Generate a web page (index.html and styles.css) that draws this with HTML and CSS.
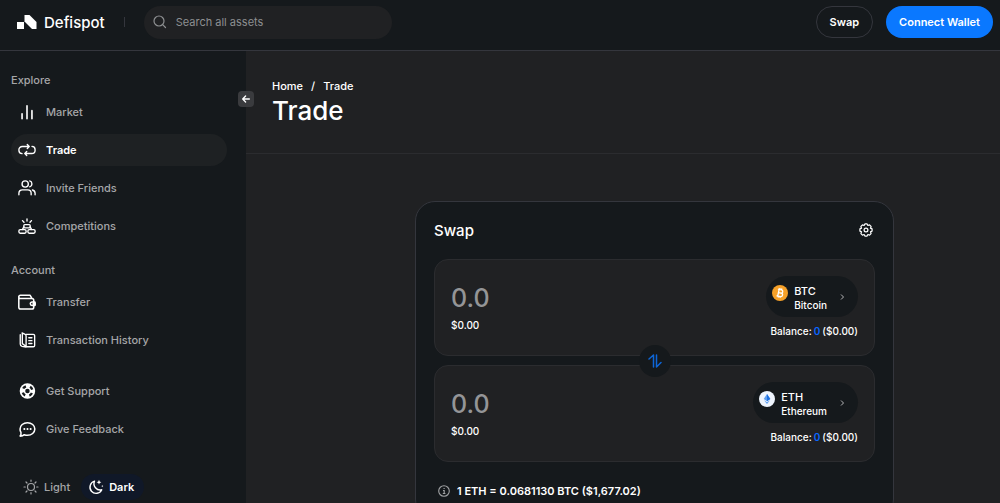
FILE: index.html
```html
<!DOCTYPE html>
<html lang="en">
<head>
  <meta charset="UTF-8">
  <meta name="viewport" content="width=device-width, initial-scale=1">
  <title>Defispot</title>
  <link rel="stylesheet" href="styles.css">
</head>
<body>

  <header class="topbar">
    <a href="#" class="logo">
      <svg width="20" height="14" viewBox="0 0 20 14" fill="#fff"><path d="M0 7h7v7H0z"/><path d="M7.500 0h5l7 7v7h-4.500L7.500 6.500z"/></svg>
      Defispot
    </a>
    <span class="divider"></span>
    <label class="search">
      <svg width="14" height="14" viewBox="0 0 14 14" fill="none" stroke="#8d8f91" stroke-width="1.200" stroke-linecap="round"><circle cx="6" cy="6" r="5"/><path d="M9.700 9.700L12.500 12.500"/></svg>
      <input type="text" placeholder="Search all assets" aria-label="Search all assets">
    </label>
    <div class="actions">
      <button class="btn btn-outline">Swap</button>
      <button class="btn btn-primary">Connect Wallet</button>
    </div>
  </header>

  <div class="layout">
    <aside class="sidebar">
      <button class="collapse" aria-label="Collapse menu">
        <svg width="8" height="8" viewBox="0 0 8 8" fill="none" stroke="#fff" stroke-width="1.300" stroke-linecap="round" stroke-linejoin="round"><path d="M7.400 4H.8M3.600 1L.7 4l2.900 3"/></svg>
      </button>

      <h2 class="nav-title">Explore</h2>
      <nav class="nav">
        <a href="#" class="nav-item">
          <svg class="icon" viewBox="0 0 20 20" stroke-width="1.800"><path d="M4.500 12v5.500M10 3v14.500M15.500 8.500v9"/></svg>
          Market
        </a>
        <a href="#" class="nav-item active">
          <svg class="icon" viewBox="0 0 20 20"><path d="M4.500 14A3.700 3.700 0 0 1 1 10.300v-.5A3.700 3.700 0 0 1 4.700 6.100H12.500M10.300 3.900l2.200 2.200-2.200 2.200M15.500 6A3.700 3.700 0 0 1 19 9.700v.5a3.700 3.700 0 0 1-3.700 3.700H7.500M9.700 16.100l-2.200-2.200 2.200-2.200"/></svg>
          Trade
        </a>
        <a href="#" class="nav-item">
          <svg class="icon" viewBox="0 0 20 20"><circle cx="8" cy="5.500" r="3.500"/><path d="M13 2.100a3.500 3.500 0 0 1 0 6.700M1 17.500v-1.700a3.800 3.800 0 0 1 3.800-3.800h6a3.800 3.800 0 0 1 3.800 3.800v1.700M16 12.200a3.800 3.800 0 0 1 3 3.600v1.700"/></svg>
          Invite Friends
        </a>
        <a href="#" class="nav-item">
          <svg class="icon" viewBox="0 0 20 20"><rect x="1" y="14" width="8" height="4" rx="1.500"/><rect x="11" y="14" width="8" height="4" rx="1.500"/><rect x="6.500" y="8.500" width="7" height="3.500" rx="1"/><path d="M6.500 11L5 13.800M13.500 11l1.500 2.800M10 2v2.500M5 4l1.700 1.900M15 4l-1.700 1.900"/></svg>
          Competitions
        </a>
      </nav>

      <h2 class="nav-title account">Account</h2>
      <nav class="nav">
        <a href="#" class="nav-item">
          <svg class="icon" viewBox="0 0 20 20" stroke-width="1.700"><path d="M.9 3.500v12.300a2 2 0 0 0 2 2h12.600a2 2 0 0 0 2-2V8a2 2 0 0 0-2-2H2.500A1.500 1.500 0 0 1 .9 4.500a1.800 1.800 0 0 1 1.800-1.900h10.800L15.500 6"/><path d="M18.800 10h-3.200a1.900 1.900 0 0 0 0 3.800h3.200z" /><path d="M17 11h2v2h-2z" fill="#fff"/></svg>
          Transfer
        </a>
        <a href="#" class="nav-item">
          <svg class="icon" viewBox="0 0 20 20"><path d="M9 3.800h8a1.500 1.500 0 0 1 1.500 1.500v10.700a1.500 1.500 0 0 1-1.500 1.500H9M4.500 2.200L7.500 3.500A2 2 0 0 1 9 5.500v12.300L4.500 17A2.500 2.500 0 0 1 2.500 14.500V4.200M4.800 2.400v11.600l4 3M12 7.500h3.500M12 10.700h3.500M12 13.900h3.500"/></svg>
          Transaction History
        </a>
      </nav>

      <nav class="nav help">
        <a href="#" class="nav-item">
          <svg class="icon lifebuoy" viewBox="0 0 20 20"><circle cx="10.500" cy="10" r="8.600" fill="#fff" stroke="none"/><circle cx="10.500" cy="10" r="5.500" stroke-width="2.600" stroke-dasharray="3.800 4.839" stroke-dashoffset="-2.420"/><circle cx="10.500" cy="10" r="2.500" fill="#15191c" stroke="none"/></svg>
          Get Support
        </a>
        <a href="#" class="nav-item">
          <svg class="icon" viewBox="0 0 20 20" stroke-width="1.700"><path d="M3.300 13.800A6.800 6.300 0 0 1 2.300 10c0-3.900 3.600-7 8.200-7s8.200 3.100 8.200 7-3.600 7-8.200 7c-1.300 0-2.500-.3-3.500-.7-1 .9-2.600 1.700-4.700 1.600.9-.9 1.300-2.500 1-4.100z"/><path d="M7 10h.1M10.500 10h.1M14 10h.1" stroke-width="2.200"/></svg>
          Give Feedback
        </a>
      </nav>

      <div class="theme">
        <button class="theme-btn">
          <svg width="16" height="16" viewBox="0 0 16 16" fill="none" stroke="#a5a6a8" stroke-width="1.200" stroke-linecap="round"><circle cx="8" cy="8" r="3.500"/><path d="M8 1v1.300M8 13.700V15M1 8h1.300M13.700 8H15M3 3l1 1M12 12l1 1M3 13l1-1M12 4l1-1"/></svg>
          Light
        </button>
        <button class="theme-btn selected">
          <svg width="16" height="16" viewBox="0 0 16 16" fill="none" stroke="#fff" stroke-width="1.400" stroke-linecap="round" stroke-linejoin="round"><path d="M6.500 2.200a6.200 6.200 0 1 0 7.300 8.600A6.300 6.300 0 0 1 6.500 2.200z"/><path d="M11 .8l.7 1.700 1.700.7-1.700.7-.7 1.700-.7-1.700-1.700-.7 1.700-.7zM14.300 6l.3.800.8.300-.8.300-.3.800-.3-.8-.8-.3.800-.3z" fill="#fff" stroke="none"/></svg>
          Dark
        </button>
      </div>
    </aside>

    <main class="main">
      <div class="page-head">
        <div class="breadcrumb"><a href="#">Home</a><span>/</span><a href="#">Trade</a></div>
        <h1>Trade</h1>
      </div>

      <div class="content">
        <section class="card">
          <div class="card-head">
            <h2>Swap</h2>
            <button class="settings" aria-label="Settings">
              <svg width="14" height="14" viewBox="0 0 14 14" fill="none" stroke="#fff" stroke-width="1.200" stroke-linejoin="round"><path d="M5.900.9h2.200l.8 1.600 1.660-.58 1.520 1.520-.58 1.660 1.600.8v2.200l-1.600.8.580 1.660-1.520 1.520-1.660-.58-.8 1.600H5.900l-.8-1.600-1.660.58-1.520-1.520.58-1.660-1.600-.8V5.900l1.600-.8-.58-1.660 1.520-1.520 1.660.58z"/><circle cx="7" cy="7" r="1.900"/></svg>
            </button>
          </div>

          <div class="boxes">
            <div class="box">
              <div class="amount">
                <input type="text" placeholder="0.0" aria-label="Amount to pay">
                <span>$0.00</span>
              </div>
              <div class="side">
                <button class="token">
                  <svg class="coin" viewBox="0 0 16 16"><circle cx="8" cy="8" r="8" fill="#f6a129"/><g fill="none" stroke="#fff" stroke-width="1.300" transform="rotate(12 8 8)"><path d="M5.200 4.600h3.600a1.600 1.600 0 0 1 0 3.300H6.300M6.300 7.900h2.900a1.700 1.700 0 0 1 0 3.500h-4M6.400 4.600v6.800M7.100 3.200v1.400M8.900 3.200v1.400M7.100 11.400v1.400M8.900 11.400v1.400"/></g></svg>
                  <span class="token-name"><b>BTC</b><small>Bitcoin</small></span>
                  <svg class="chevron" viewBox="0 0 5 8"><path d="M1 1.500L3.500 4 1 6.500"/></svg>
                </button>
                <p class="balance"><span>Balance:</span><em>0</em><span>($0.00)</span></p>
              </div>
            </div>

            <button class="switch" aria-label="Switch tokens">
              <svg width="14" height="14" viewBox="0 0 14 14" fill="none" stroke="#0d66d8" stroke-width="1.500" stroke-linecap="round" stroke-linejoin="round"><path d="M1 5l4.500-4v12M8.500 1v12L13 8.500"/></svg>
            </button>

            <div class="box">
              <div class="amount">
                <input type="text" placeholder="0.0" aria-label="Amount to receive">
                <span>$0.00</span>
              </div>
              <div class="side">
                <button class="token">
                  <svg class="coin" viewBox="0 0 16 16"><circle cx="8" cy="8" r="8" fill="#eef4fd"/><path d="M8 3l3.300 5L8 10.200 4.700 8z" fill="#5b9df0"/><path d="M8 3l3.300 5L8 10.200z" fill="#1d6fe0"/><path d="M5 9.200l3 2 3-2L8 13z" fill="#5b9df0"/></svg>
                  <span class="token-name"><b>ETH</b><small>Ethereum</small></span>
                  <svg class="chevron" viewBox="0 0 5 8"><path d="M1 1.500L3.500 4 1 6.500"/></svg>
                </button>
                <p class="balance"><span>Balance:</span><em>0</em><span>($0.00)</span></p>
              </div>
            </div>
          </div>

          <div class="rate">
            <svg width="12" height="12" viewBox="0 0 12 12" fill="none" stroke="#a0a2a4" stroke-width="1.100"><circle cx="6" cy="6" r="5.300"/><path d="M5 5.500h1.200v3M4.800 8.500h2.600M5.500 3.500h1.200"/></svg>
            <span>1 ETH = 0.0681130 BTC ($1,677.02)</span>
          </div>
        </section>
      </div>
    </main>
  </div>

</body>
</html>
```
FILE: styles.css
```css
* {
  box-sizing: border-box;
  margin: 0;
  padding: 0;
}

body {
  height: 100vh;
  display: flex;
  flex-direction: column;
  overflow: hidden;
  background: #202123;
  color: #fff;
  font-family: Inter, sans-serif;
  font-size: 11px;
  font-weight: 500;
}

a {
  color: inherit;
  text-decoration: none;
}

button,
input {
  font: inherit;
  color: inherit;
  background: none;
  border: none;
  outline: none;
}

button {
  cursor: pointer;
}

/* top bar */
.topbar {
  display: flex;
  align-items: center;
  flex-shrink: 0;
  height: 51px;
  padding: 0 7px 6px 17px;
  background: #15191c;
  border-bottom: 1px solid #34363d;
}

.logo {
  display: flex;
  align-items: center;
  gap: 7px;
  font-size: 15px;
}

.divider {
  width: 1px;
  height: 10px;
  margin: 0 19px;
  background: #34363d;
}

.search {
  display: flex;
  align-items: center;
  gap: 9px;
  width: 248px;
  height: 33px;
  padding: 0 9px;
  border-radius: 17px;
  background: #202123;
}

.search input {
  flex: 1;
  min-width: 0;
  font-weight: 400;
}

.search input::placeholder {
  color: #8d8f91;
  opacity: 1;
}

.actions {
  display: flex;
  gap: 13px;
  margin-left: auto;
}

.btn {
  height: 32px;
  padding: 0 13px;
  border-radius: 16px;
  font-weight: 600;
}

.btn-outline {
  border: 1px solid #34363d;
}

.btn-primary {
  background: #0a78ff;
}

/* sidebar */
.layout {
  display: flex;
  flex: 1;
  min-height: 0;
}

.sidebar {
  position: relative;
  flex-shrink: 0;
  width: 246px;
  padding: 19px 19px 0 11px;
  background: #15191c;
  color: #a5a6a8;
}

.collapse {
  position: absolute;
  top: 40px;
  right: -8px;
  display: flex;
  align-items: center;
  justify-content: center;
  width: 16px;
  height: 16px;
  border-radius: 4px;
  background: #3a3b3e;
}

.nav-title {
  margin-bottom: 6px;
  font-size: 11px;
  font-weight: 500;
  line-height: 20px;
}

.account {
  margin-top: 18px;
}

.nav {
  display: flex;
  flex-direction: column;
  gap: 6px;
}

.nav-item {
  display: flex;
  align-items: center;
  gap: 10px;
  height: 32px;
  padding: 0 7px;
  border-radius: 16px;
}

.nav-item.active {
  background: #1e2123;
  color: #fff;
  font-weight: 600;
}

.icon {
  width: 18px;
  height: 18px;
  fill: none;
  stroke: #fff;
  stroke-linecap: round;
  stroke-linejoin: round;
}

.icon:not([stroke-width]) {
  stroke-width: 1.5;
}

.lifebuoy {
  stroke: #15191c;
  stroke-linecap: butt;
}

.help {
  margin-top: 19px;
}

.theme {
  display: flex;
  gap: 4px;
  margin: 29px 0 0 5px;
}

.theme-btn {
  display: flex;
  align-items: center;
  gap: 5px;
  height: 26px;
  padding: 0 7px;
  border-radius: 13px;
}

.theme-btn.selected {
  padding-right: 10px;
  background: #101828;
  color: #fff;
  font-weight: 600;
}

/* main */
.main {
  flex: 1;
  min-width: 0;
  overflow-y: auto;
  scrollbar-width: none;
}

.page-head {
  padding: 27px 26px 25px;
  border-bottom: 1px solid #2b2c2f;
}

.breadcrumb {
  display: flex;
  gap: 8px;
  line-height: 16px;
}

.page-head h1 {
  font-size: 26px;
  font-weight: 500;
  line-height: 34px;
}

.content {
  display: flex;
  justify-content: center;
  padding: 47px 0 40px 63px;
}

.card {
  width: 479px;
  padding: 19px 18px;
  background: #15191c;
  border: 1px solid #34363d;
  border-radius: 20px;
}

.card-head {
  display: flex;
  align-items: center;
  justify-content: space-between;
  height: 18px;
  margin-bottom: 20px;
}

.card-head h2 {
  font-size: 15px;
  font-weight: 500;
}

.settings {
  display: flex;
  margin-right: 2px;
}

.boxes {
  position: relative;
  display: flex;
  flex-direction: column;
  gap: 9px;
}

.box {
  display: flex;
  justify-content: space-between;
  height: 97px;
  padding: 16px;
  background: #202123;
  border: 1px solid #2b2c2f;
  border-radius: 14px;
}

.amount {
  display: flex;
  flex-direction: column;
  padding-top: 6px;
  font-size: 10px;
}

.amount input {
  width: 160px;
  height: 32px;
  font-size: 25px;
}

.amount input::placeholder {
  color: #949597;
  opacity: 1;
}

.amount span {
  margin-top: 4px;
  line-height: 14px;
}

.side {
  display: flex;
  flex-direction: column;
  align-items: flex-end;
}

.token {
  display: flex;
  align-items: center;
  height: 41px;
  padding: 0 13px 0 6px;
  border-radius: 21px;
  background: #15191c;
  text-align: left;
}

.coin {
  width: 16px;
  height: 16px;
  margin: 0 6px 8px 0;
}

.token-name {
  display: flex;
  flex-direction: column;
  padding-top: 3px;
}

.token-name b {
  font-size: 11px;
  font-weight: 500;
  line-height: 14px;
}

.token-name small {
  font-size: 10px;
  line-height: 14px;
}

.chevron {
  width: 5px;
  height: 8px;
  margin-left: 13px;
  fill: none;
  stroke: #b5b6b8;
}

.balance {
  display: flex;
  gap: 2px;
  margin-top: 7px;
  font-size: 10px;
  line-height: 14px;
}

.balance em {
  font-style: normal;
  font-weight: 600;
  color: #0a66ff;
}

.switch {
  position: absolute;
  top: 50%;
  left: 50%;
  display: flex;
  align-items: center;
  justify-content: center;
  width: 32px;
  height: 32px;
  border-radius: 50%;
  background: #15191c;
  transform: translate(-50%, -50%);
}

.rate {
  display: flex;
  align-items: center;
  gap: 7px;
  margin-top: 21px;
  padding-left: 4px;
  font-size: 11px;
  font-weight: 600;
  line-height: 16px;
}
```
